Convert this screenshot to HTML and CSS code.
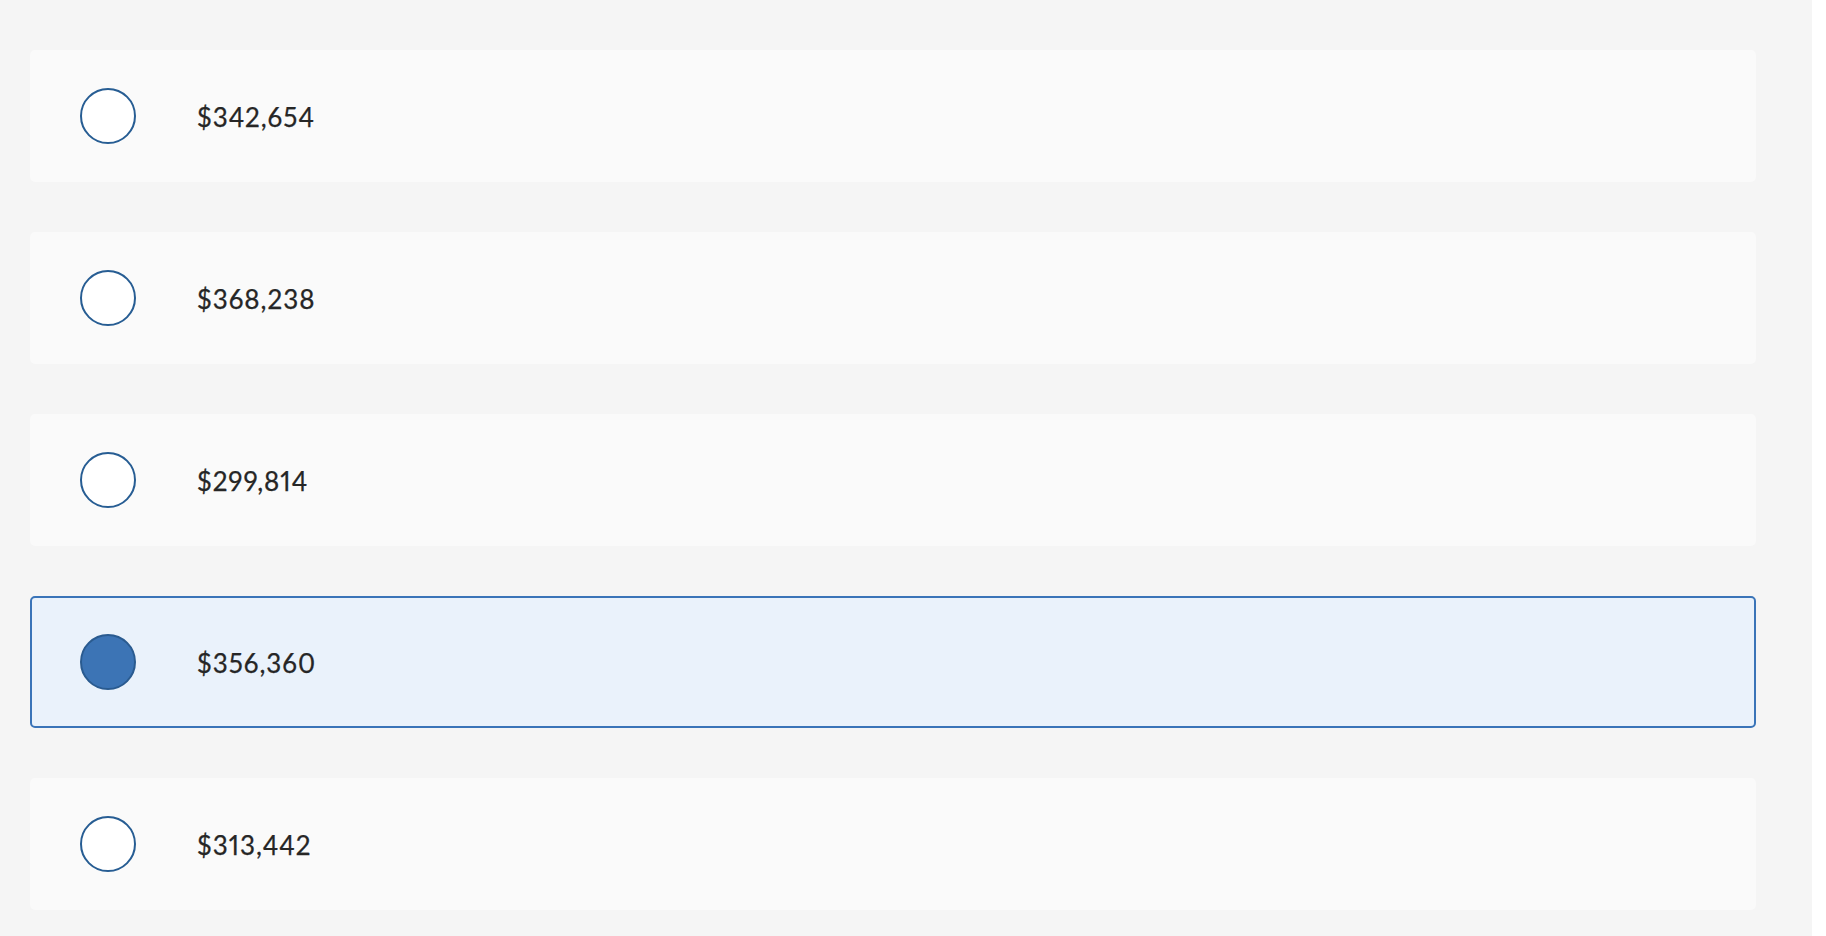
FILE: index.html
```html
<!DOCTYPE html>
<html>
<head>
<meta charset="utf-8">
<link rel="stylesheet" href="styles.css">
</head>
<body>
<div class="page">
  <ul class="options">
    <li class="option"><span class="radio"></span><span class="label">$342,654</span></li>
    <li class="option"><span class="radio"></span><span class="label">$368,238</span></li>
    <li class="option"><span class="radio"></span><span class="label">$299,814</span></li>
    <li class="option selected"><span class="radio"></span><span class="label">$356,360</span></li>
    <li class="option"><span class="radio"></span><span class="label">$313,442</span></li>
  </ul>
</div>
</body>
</html>
```

FILE: styles.css
```css
html, body {
  margin: 0;
  padding: 0;
  background: #ffffff;
}
body {
  font-family: "Lato", "Open Sans", sans-serif;
}
.page {
  width: 1812px;
  height: 936px;
  background: #f5f5f5;
  box-sizing: border-box;
  padding: 50px 56px 0 30px;
}
.options {
  list-style: none;
  margin: 0;
  padding: 0;
  display: flex;
  flex-direction: column;
  gap: 50px;
}
.option {
  height: 132px;
  box-sizing: border-box;
  background: #fafafa;
  border: 2px solid transparent;
  border-radius: 5px;
  display: flex;
  align-items: center;
  padding-left: 48px;
}
.option.selected {
  background: #eaf2fb;
  border-color: #3a74b8;
}
.radio {
  width: 56px;
  height: 56px;
  box-sizing: border-box;
  border-radius: 50%;
  border: 2px solid #275d93;
  background: #ffffff;
  flex: none;
}
.selected .radio {
  background: #3c74b5;
  border-color: #2a5b90;
}
.label {
  margin-left: 61px;
  margin-top: 2px;
  font-size: 26px;
  color: #262626;
  letter-spacing: 1px;
  font-variant-numeric: proportional-nums;
  -webkit-text-stroke: 0.25px #262626;
}
```
